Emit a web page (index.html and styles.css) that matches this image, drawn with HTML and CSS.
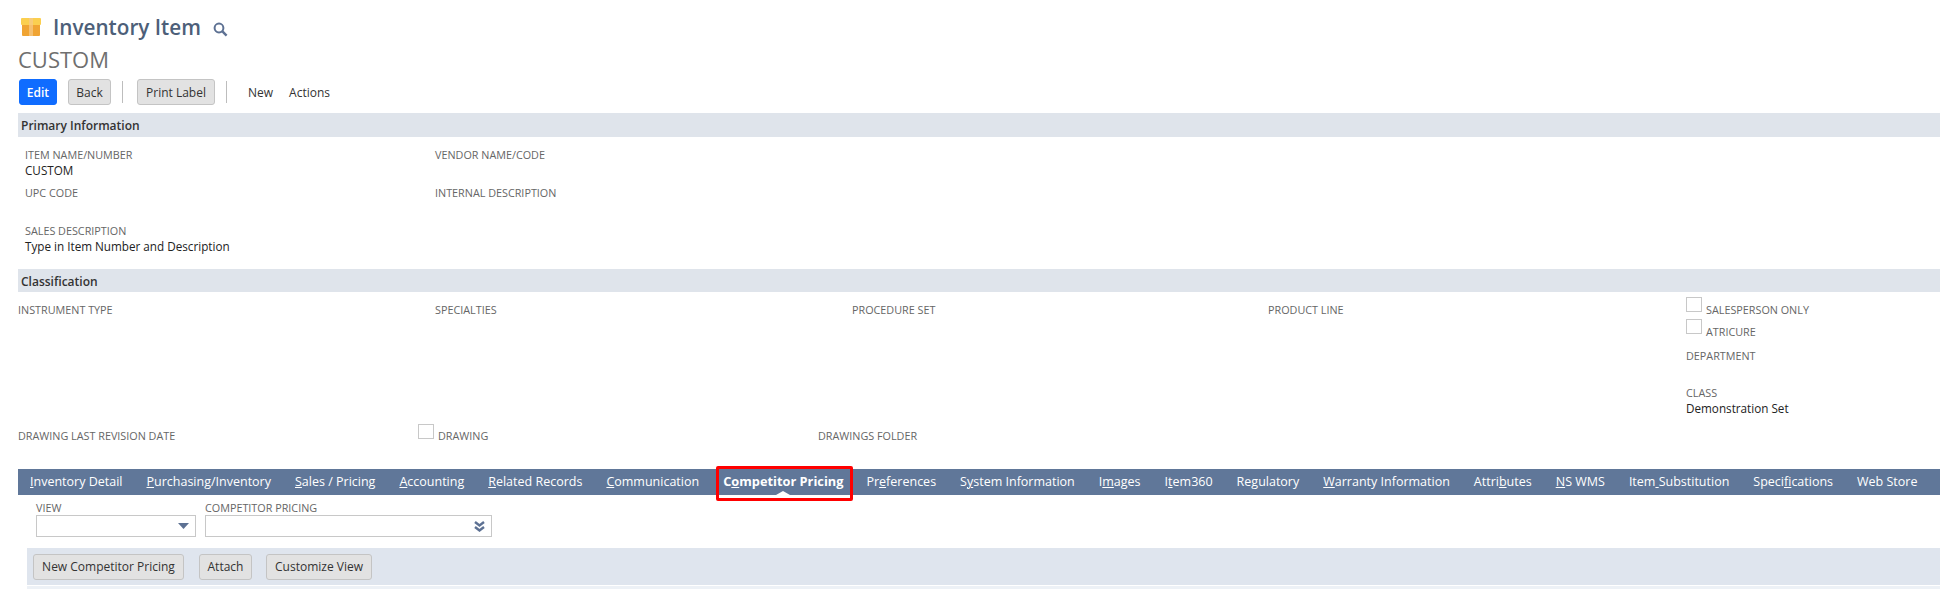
FILE: index.html
```html
<!DOCTYPE html>
<html lang="en">
<head>
<meta charset="utf-8">
<title>Inventory Item</title>
<link rel="stylesheet" href="styles.css">
</head>
<body>
<header class="title-row">
  <svg class="box-icon" width="22" height="20" viewBox="0 0 22 20"><rect x="2" y="6" width="18" height="13" rx="1" fill="#f0a433"/><rect x="1" y="1" width="20" height="7" rx="1" fill="#fbcf4f"/><rect x="9" y="1" width="4" height="18" fill="#f7c987" opacity=".75"/></svg>
  <h1 class="title">Inventory Item</h1>
  <svg class="search-icon" width="15" height="15" viewBox="0 0 15 15"><circle cx="6" cy="6" r="4.4" fill="none" stroke="#5d7193" stroke-width="2"/><path d="M9.4 9.4 13.6 13.6" stroke="#5d7193" stroke-width="2.4"/></svg>
</header>
<div class="record-name">CUSTOM</div>
<div class="actions">
  <button class="btn primary">Edit</button>
  <button class="btn back">Back</button>
  <span class="sep"></span>
  <button class="btn print">Print Label</button>
  <span class="sep"></span>
  <span class="menu new">New</span>
  <span class="menu">Actions</span>
</div>

<section class="band primary-band">Primary Information</section>
<div class="primary-grid">
  <div class="field item"><div class="lbl">ITEM NAME/NUMBER</div><div class="val">CUSTOM</div></div>
  <div class="field item"><div class="lbl">VENDOR NAME/CODE</div></div>
  <div class="field upc"><div class="lbl">UPC CODE</div></div>
  <div class="field upc"><div class="lbl">INTERNAL DESCRIPTION</div></div>
  <div class="field sales"><div class="lbl">SALES DESCRIPTION</div><div class="val">Type in Item Number and Description</div></div>
</div>

<section class="band class-band">Classification</section>
<div class="class-grid">
  <div class="lbl">INSTRUMENT TYPE</div>
  <div class="lbl">SPECIALTIES</div>
  <div class="lbl">PROCEDURE SET</div>
  <div class="lbl">PRODUCT LINE</div>
  <div class="side">
    <div class="check-row"><span class="check"></span><span class="lbl">SALESPERSON ONLY</span></div>
    <div class="check-row"><span class="check"></span><span class="lbl">ATRICURE</span></div>
    <div class="lbl dept">DEPARTMENT</div>
    <div class="lbl cls">CLASS</div>
    <div class="val">Demonstration Set</div>
  </div>
</div>
<div class="drawing-row">
  <div class="lbl d1">DRAWING LAST REVISION DATE</div>
  <div class="check-row d2"><span class="check"></span><span class="lbl">DRAWING</span></div>
  <div class="lbl">DRAWINGS FOLDER</div>
</div>

<nav class="tabs">
  <a class="tab"><u>I</u>nventory Detail</a>
  <a class="tab"><u>P</u>urchasing/Inventory</a>
  <a class="tab"><u>S</u>ales / Pricing</a>
  <a class="tab"><u>A</u>ccounting</a>
  <a class="tab"><u>R</u>elated Records</a>
  <a class="tab"><u>C</u>ommunication</a>
  <a class="tab active">C<u>o</u>mpetitor Pricing<span class="caret"></span><span class="highlight"></span></a>
  <a class="tab">Pr<u>e</u>ferences</a>
  <a class="tab">S<u>y</u>stem Information</a>
  <a class="tab">I<u>m</u>ages</a>
  <a class="tab">I<u>t</u>em360</a>
  <a class="tab">Re<u>g</u>ulatory</a>
  <a class="tab"><u>W</u>arranty Information</a>
  <a class="tab">Attri<u>b</u>utes</a>
  <a class="tab"><u>N</u>S WMS</a>
  <a class="tab">Item<u> </u>Substitution</a>
  <a class="tab">Speci<u>fi</u>cations</a>
  <a class="tab">Web Store</a>
</nav>

<div class="filters">
  <div class="filter view"><div class="lbl">VIEW</div>
    <div class="select"><svg width="11" height="6" viewBox="0 0 11 6"><path d="M0 0H11L5.5 6Z" fill="#5d7193"/></svg></div></div>
  <div class="filter comp"><div class="lbl">COMPETITOR PRICING</div>
    <div class="select"><svg width="11" height="11" viewBox="0 0 11 11"><path d="M1 1 5.5 4.5 10 1M1 6 5.5 9.5 10 6" fill="none" stroke="#5d7193" stroke-width="2.4"/></svg></div></div>
</div>

<div class="toolbar">
  <button class="btn tb1">New Competitor Pricing</button>
  <button class="btn tb2">Attach</button>
  <button class="btn tb3">Customize View</button>
</div>
<div class="strip"></div>
</body>
</html>
```
FILE: styles.css
```css
* { box-sizing: border-box; }
html, body { margin: 0; padding: 0; }
body {
  width: 1940px;
  height: 589px;
  overflow: hidden;
  background: #fff;
  font-family: "Open Sans", "Liberation Sans", sans-serif;
  font-size: 12px;
  color: #222;
}
.title-row { display: flex; align-items: center; height: 39px; padding: 15px 0 0 20px; }
.box-icon { display: block; margin-right: 11px; }
.title { margin: 0; font-size: 20.7px; line-height: 24px; font-weight: 600; color: #4d5f79; }
.search-icon { margin: 5px 0 0 12px; }
.record-name { height: 40px; padding: 7px 0 0 18px; font-size: 22px; line-height: 27px; color: #6f6f6f; }
.actions { display: flex; align-items: center; height: 26px; padding-left: 19px; }
.btn {
  height: 26px;
  padding: 0;
  border: 1px solid #c4c4c4;
  border-radius: 3px;
  background: #e2e2e2;
  font: 400 12px "Open Sans", sans-serif;
  color: #333;
}
.btn.primary { width: 38px; background: #0f6cff; border-color: #0f6cff; color: #fff; font-weight: 600; }
.btn.back { width: 43px; margin-left: 11px; }
.btn.print { width: 78px; }
.sep { width: 1px; height: 22px; background: #bdbdbd; margin: 0 14px 0 11px; }
.menu { font-size: 12px; color: #333; margin-right: 16px; }
.menu.new { margin-left: 7px; }
.band { height: 24px; margin-left: 18px; padding-left: 3px; background: #dfe4eb; font-size: 12px; line-height: 25px; font-weight: 600; color: #333; }
.primary-band { margin-top: 8px; }
.class-band { height: 23px; }
.lbl { font-size: 10.8px; line-height: 14px; color: #666; white-space: nowrap; }
.val { font-size: 11.7px; line-height: 17px; color: #222; white-space: nowrap; }
.primary-grid { display: grid; grid-template-columns: 410px 1fr; grid-template-rows: 38px 38px auto; height: 132px; padding: 11px 0 0 25px; }
.field.sales { grid-column: 1 / 3; }
.class-grid { display: grid; grid-template-columns: 417px 417px 416px 418px 1fr; height: 129px; padding: 11px 0 0 18px; }
.side { margin-top: -11px; padding-top: 3px; }
.check-row { display: flex; align-items: flex-end; height: 22px; }
.check { flex: none; width: 16px; height: 15px; margin: 0 4px 4px 0; border: 1px solid #c8c8c8; background: #fff; }
.side .check { margin-bottom: 5px; }
.dept { margin-top: 10px; }
.cls { margin-top: 23px; }
.drawing-row { display: flex; align-items: flex-end; height: 23px; margin-top: -1px; padding-left: 18px; }
.d1 { width: 400px; }
.d2 { width: 400px; }
.tabs { display: flex; height: 26px; margin: 26px 0 0 18px; padding-left: 12px; background: #607799; }
.tab { position: relative; flex: none; height: 26px; margin-right: 24px; font-size: 12.5px; line-height: 25px; color: #fff; white-space: nowrap; }
.tab.active { margin-right: 23px; font-size: 12.8px; font-weight: 700; }
.caret { position: absolute; left: 50%; bottom: 0; width: 0; height: 0; margin-left: -7px; border: 7px solid transparent; border-top: 0; border-bottom: 4px solid #fff; }
.highlight { position: absolute; left: -7px; right: -10px; top: -3px; height: 35px; border: 3px solid #f00; border-radius: 2px; }
.filters { display: flex; height: 53px; padding: 6px 0 0 36px; }
.view { width: 169px; }
.comp { width: 287px; }
.select { display: flex; align-items: center; justify-content: flex-end; height: 22px; padding-right: 6px; border: 1px solid #c8c8c8; background: #fff; }
.view .select { width: 160px; }
.toolbar { display: flex; align-items: center; height: 37px; margin-left: 27px; padding-left: 6px; background: #dfe5ee; }
.tb1 { width: 151px; }
.tb2 { width: 53px; margin-left: 15px; }
.tb3 { width: 106px; margin-left: 14px; }
.strip { height: 4px; margin: 1px 0 0 27px; background: #edf1f6; }
```
